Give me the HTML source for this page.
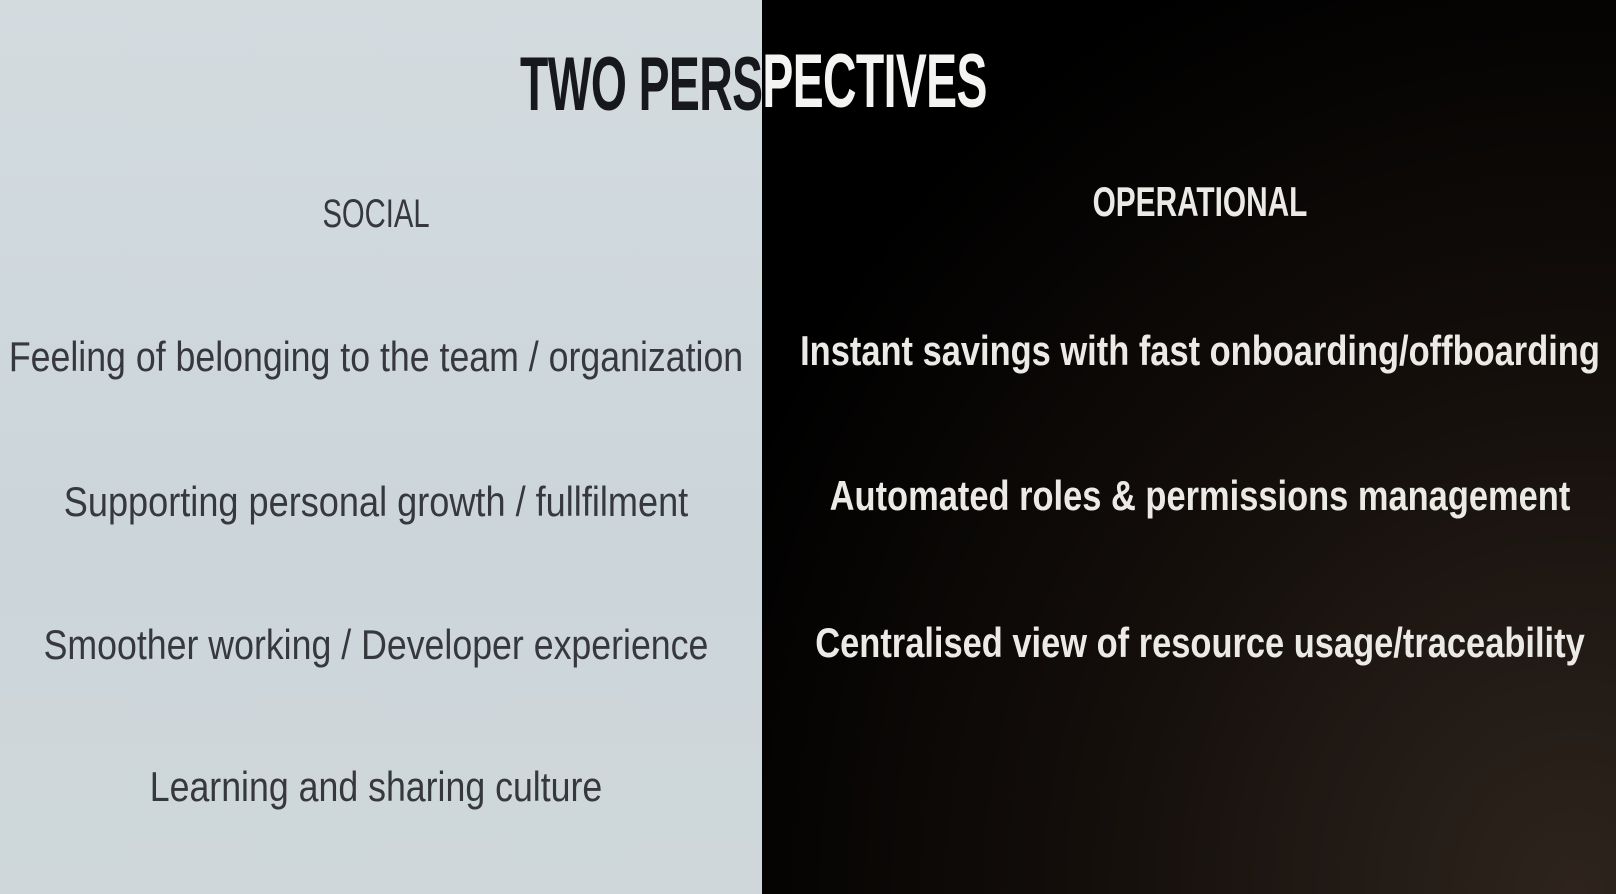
<!DOCTYPE html>
<html><head><meta charset="utf-8"><style>
html,body{margin:0;padding:0}
body{width:1616px;height:894px;position:relative;overflow:hidden;font-family:"Liberation Sans Narrow","Liberation Sans",sans-serif;}
.left{position:absolute;left:0;top:0;width:762px;height:894px;background:linear-gradient(180deg,#d3dbdf 0%,#ccd6da 60%,#cfd7da 100%);}
.right{position:absolute;left:762px;top:0;width:854px;height:894px;background:radial-gradient(ellipse at 95% 100%,#2e241d 0%,#120d0a 45%,#000 80%);}
.t{position:absolute;white-space:nowrap;transform-origin:center center;text-align:center}
.l{color:#36383d;font-size:42px;left:-624px;width:2000px;}
.r{color:#eceae6;font-size:42px;font-weight:bold;left:200px;width:2000px;}
.title{position:absolute;top:45px;left:0;width:1616px;height:80px;}
.title span{position:absolute;left:520px;top:0;font-size:76px;font-weight:bold;letter-spacing:-1px;white-space:nowrap;transform:scaleX(0.61);transform-origin:left top;line-height:80px}
.clipL{position:absolute;left:0;top:0;width:762px;height:90px;overflow:hidden}
.clipR{position:absolute;left:762px;top:-3px;width:854px;height:90px;overflow:hidden}
.clipR span{left:-242px !important}
</style></head><body>
<div class="left"></div><div class="right"></div>
<div class="title">
 <div class="clipL"><span style="color:#17181b">TWO PERSPECTIVES</span></div>
 <div class="clipR"><span style="color:#f4f4f2">TWO PERSPECTIVES</span></div>
</div>
<div class="t l" style="top:192px;font-size:40px;transform:scaleX(0.73)">SOCIAL</div>
<div class="t r" style="top:178px;transform:scaleX(0.71)">OPERATIONAL</div>

<div class="t l" style="top:333px;transform:scaleX(0.85)">Feeling of belonging to the team / organization</div>
<div class="t l" style="top:478px;transform:scaleX(0.86)">Supporting personal growth / fullfilment</div>
<div class="t l" style="top:621px;transform:scaleX(0.85)">Smoother working / Developer experience</div>
<div class="t l" style="top:763px;transform:scaleX(0.85)">Learning and sharing culture</div>

<div class="t r" style="top:327px;transform:scaleX(0.82)">Instant savings with fast onboarding/offboarding</div>
<div class="t r" style="top:472px;transform:scaleX(0.82)">Automated roles &amp; permissions management</div>
<div class="t r" style="top:619px;transform:scaleX(0.82)">Centralised view of resource usage/traceability</div>
</body></html>
